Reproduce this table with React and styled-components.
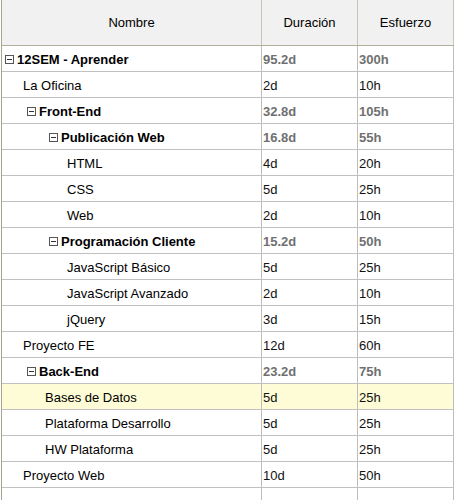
import React from "react";
import styled, { createGlobalStyle } from "styled-components";

const GlobalStyle = createGlobalStyle`
  html, body {
    margin: 0;
    padding: 0;
    background: #fff;
  }
  body {
    font-family: "Liberation Sans", Arial, sans-serif;
    font-size: 13px;
    color: #000;
  }
`;

const Grid = styled.div`
  width: 452px;
  margin-left: 1px;
  border-left: 1px solid #a8a293;
  overflow: hidden;
`;

const HeaderRow = styled.div`
  display: flex;
  height: 45px;
  background: #f1f1f1;
  border-bottom: 1px solid #b4ae9f;
`;

const HeaderCell = styled.div`
  width: ${({ w }) => w}px;
  display: flex;
  align-items: center;
  justify-content: center;
  border-right: 1px solid #c9c4b8;
  padding-bottom: 1px;
  box-sizing: border-box;
`;

const Row = styled.div`
  display: flex;
  height: 25px;
  border-bottom: 1px solid #c1c1c1;
  background: ${({ highlight }) => (highlight ? "#fefcd6" : "#fff")};
`;

const NameCell = styled.div`
  width: 260px;
  display: flex;
  align-items: center;
  padding-left: ${({ pad }) => pad}px;
  padding-top: 2px;
  box-sizing: border-box;
  border-right: 1px solid #bdbdbd;
  font-weight: ${({ bold }) => (bold ? "bold" : "normal")};
  white-space: nowrap;
`;

const ValueCell = styled.div`
  width: ${({ w }) => w}px;
  display: flex;
  align-items: center;
  padding-left: 1px;
  padding-top: 2px;
  box-sizing: border-box;
  border-right: 1px solid #bdbdbd;
  font-weight: ${({ bold }) => (bold ? "bold" : "normal")};
  color: ${({ bold }) => (bold ? "#707070" : "#111")};
`;

const Toggle = styled.span`
  display: inline-block;
  position: relative;
  width: 9px;
  height: 9px;
  border: 1px solid #555;
  box-sizing: border-box;
  margin-right: 3px;
  margin-top: -1px;
  background: #fff;
  &::after {
    content: "";
    position: absolute;
    left: 1px;
    right: 1px;
    top: 3px;
    height: 1px;
    background: #333;
  }
`;

const rows = [
  { name: "12SEM - Aprender", level: 0, group: true, dur: "95.2d", eff: "300h" },
  { name: "La Oficina", level: 1, dur: "2d", eff: "10h" },
  { name: "Front-End", level: 1, group: true, dur: "32.8d", eff: "105h" },
  { name: "Publicación Web", level: 2, group: true, dur: "16.8d", eff: "55h" },
  { name: "HTML", level: 3, dur: "4d", eff: "20h" },
  { name: "CSS", level: 3, dur: "5d", eff: "25h" },
  { name: "Web", level: 3, dur: "2d", eff: "10h" },
  { name: "Programación Cliente", level: 2, group: true, dur: "15.2d", eff: "50h" },
  { name: "JavaScript Básico", level: 3, dur: "5d", eff: "25h" },
  { name: "JavaScript Avanzado", level: 3, dur: "2d", eff: "10h" },
  { name: "jQuery", level: 3, dur: "3d", eff: "15h" },
  { name: "Proyecto FE", level: 1, dur: "12d", eff: "60h" },
  { name: "Back-End", level: 1, group: true, dur: "23.2d", eff: "75h" },
  { name: "Bases de Datos", level: 2, dur: "5d", eff: "25h", highlight: true },
  { name: "Plataforma Desarrollo", level: 2, dur: "5d", eff: "25h" },
  { name: "HW Plataforma", level: 2, dur: "5d", eff: "25h" },
  { name: "Proyecto Web", level: 1, dur: "10d", eff: "50h" },
  { name: "", level: 1, dur: "", eff: "" },
];

const App = () => {
  return (
    <>
      <GlobalStyle />
      <Grid>
        <HeaderRow>
          <HeaderCell w={260}>Nombre</HeaderCell>
          <HeaderCell w={96}>Duración</HeaderCell>
          <HeaderCell w={96}>Esfuerzo</HeaderCell>
        </HeaderRow>
        {rows.map((r, i) => (
          <Row key={i} highlight={r.highlight}>
            <NameCell
              bold={r.group}
              pad={r.group ? 22 * r.level + 3 : 22 * r.level - 1}
            >
              {r.group && <Toggle />}
              {r.name}
            </NameCell>
            <ValueCell w={96} bold={r.group}>
              {r.dur}
            </ValueCell>
            <ValueCell w={96} bold={r.group}>
              {r.eff}
            </ValueCell>
          </Row>
        ))}
      </Grid>
    </>
  );
};

export default App;
